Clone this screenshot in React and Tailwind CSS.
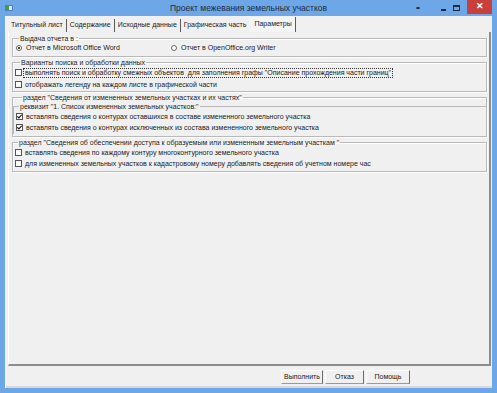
import { useState } from "react";

const font = { fontFamily: '"Liberation Sans", Arial, sans-serif' };

const CheckBox = ({ checked }) => (
  <span className="w-[7px] h-[7px] border border-[#555] bg-white flex items-center justify-center shrink-0">
    {checked && (
      <svg width="5" height="5" viewBox="0 0 5 5">
        <path d="M0.3 2.3 L1.9 3.9 L4.7 0.8" stroke="#111" strokeWidth="1.2" fill="none" />
      </svg>
    )}
  </span>
);

const Radio = ({ checked }) => (
  <span className="w-[6px] h-[6px] rounded-full border border-[#666] bg-white flex items-center justify-center shrink-0">
    {checked && <span className="w-[2px] h-[2px] rounded-full bg-[#111]" />}
  </span>
);

const Row = ({ checked, children, focus }) => (
  <div className={"flex items-center h-[11px] leading-[11px] " + (focus ? "gap-[1px]" : "gap-[3px]")}>
    <CheckBox checked={checked} />
    <span className={focus ? "border border-dotted border-[#333] px-[1px] leading-[8px]" : ""}>{children}</span>
  </div>
);

const Group = ({ title, className, legendClass, children }) => (
  <fieldset className={"border border-[#b9b9b9] shadow-[1px_1px_0_#fff,inset_1px_1px_0_#fff] " + (className || "")}>
    <legend className={"px-[1px] leading-[9px] " + (legendClass || "ml-[3px]")}>{title}</legend>
    {children}
  </fieldset>
);

const tabs = ["Титульный лист", "Содержание", "Исходные данные", "Графическая часть", "Параметры"];

const App = () => {
  const [tab, setTab] = useState(4);

  return (
    <div className="w-[497px] h-[393px] bg-[#6ea7e7] flex flex-col text-[7px] text-[#1a1a1a]" style={font}>
      {/* title bar */}
      <div className="h-[16px] flex items-center shrink-0">
        <div className="w-[100px] shrink-0 flex">
          <div className="ml-[5px] w-[8px] h-[6px] bg-[#dfe9f3] border border-[#4d7fb5] flex">
            <span className="w-[3px] bg-[#3f9a56]" />
          </div>
        </div>
        <div className="flex-1 text-center text-[8.5px] text-[#1c2b3d] whitespace-nowrap">Проект межевания земельных участков</div>
        <div className="w-[100px] shrink-0 flex items-center justify-end h-full">
          <span className="text-[7px] font-bold text-[#1c2b3d] mr-[22px] tracking-[-1px]">••</span>
          <span className="w-[5px] h-[2px] bg-[#1c2b3d] mt-[3px] mr-[7px]" />
          <span className="w-[7px] h-[6px] border border-[#1c2b3d] border-t-2 mr-[7px]" />
          <span className="w-[25px] h-[14px] -mt-[2px] bg-[#c7403b] text-white text-[9px] font-bold flex items-center justify-center mr-[5px]">✕</span>
        </div>
      </div>

      {/* client */}
      <div className="flex-1 mx-[5px] mb-[5px] bg-[#f0f0f0] flex flex-col border-l border-[#f8fbff]">
        {/* tabs */}
        <div className="h-[16px] flex items-end pl-[2px] shrink-0">
          {tabs.map((t, i) => (
            <div
              key={t}
              onClick={() => setTab(i)}
              className={
                "cursor-pointer flex items-center " +
                (i === tab
                  ? "h-[15px] pl-[5px] pr-[3px] bg-[#f4f4f4] border-r border-[#5a5a5a]"
                  : i === tab - 1
                  ? "h-[13px] px-[3px]"
                  : "h-[13px] px-[3px] border-r border-[#5a5a5a]")
              }
            >
              {t}
            </div>
          ))}
        </div>

        {/* panel */}
        <div className="flex-1 ml-[2px] mr-[1px] border-r-2 border-b-2 border-r-[#8d8d8d] border-b-[#8d8d8d] border-l border-l-[#fff] flex flex-col pl-[3px] pr-[2px] pt-[2px] gap-[1px]">
          <Group title="Выдача отчета в :" className="pb-[3px] pl-[3px]">
            <div className="flex items-center h-[10px]">
              <div className="flex items-center gap-[4px] w-[155px]">
                <Radio checked />
                <span>Отчет в Microsoft Office Word</span>
              </div>
              <div className="flex items-center gap-[4px]">
                <Radio />
                <span>Отчет в OpenOffice.org Writer</span>
              </div>
            </div>
          </Group>

          <Group title="Варианты поиска и обработки данных" legendClass="ml-[5px]" className="pb-[1px] pl-[2px]">
            <div className="flex flex-col gap-[1px]">
              <Row focus>выполнять поиск и обработку смежных объектов&nbsp; для заполнения графы "Описание прохождения части границ"</Row>
              <Row>отображать легенду на каждом листе в графической части</Row>
            </div>
          </Group>

          <Group title={'раздел "Сведения от измененных земельных участках и их частях"'} legendClass="ml-[9px]" className="pb-[2px]">
            <Group title={'реквизит "1. Список измененных земельных участков:"'} legendClass="ml-[3px]" className="pl-[2px] pb-[1px] border-r-0 border-b-0 shadow-none">
              <Row checked>вставлять сведения о контурах оставшихся в составе измененного земельного участка</Row>
              <Row checked>вставлять сведения о контурах исключенных из состава измененного земельного участка</Row>
            </Group>
          </Group>

          <Group title={'раздел "Сведения об обеспечении доступа к образуемым или измененным земельным участкам "'} legendClass="ml-[3px]" className="pl-[2px] pb-[2px]">
            <Row>вставлять сведения по каждому контуру многоконтурного земельного участка</Row>
            <Row>для измененных земельных участков к кадастровому номеру добавлять сведения об учетном номере час</Row>
          </Group>
        </div>

        {/* buttons */}
        <div className="h-[22px] flex items-center pt-[2px] pl-[275px] gap-[2px] shrink-0 border-b-2 border-[#d9d9d9]">
          {["Выполнить", "Отказ", "Помощь"].map((b, i) => (
            <button
              key={b}
              className={
                "h-[14px] bg-[#f0f0f0] border border-[#fff] border-r-[#6b6b6b] border-b-[#9a9a9a] flex items-center justify-center " +
                (i === 0 ? "w-[42px]" : i === 1 ? "w-[39px]" : "w-[44px]")
              }
            >
              {b}
            </button>
          ))}
        </div>
      </div>
    </div>
  );
};

export default App;
